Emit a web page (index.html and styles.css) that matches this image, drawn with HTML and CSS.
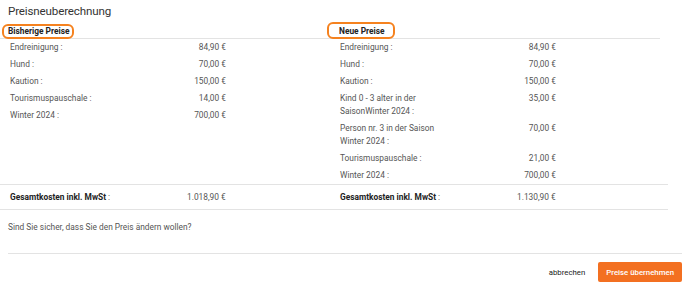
FILE: index.html
```html
<!DOCTYPE html>
<html lang="de">
<head>
<meta charset="utf-8">
<title>Preisneuberechnung</title>
<link rel="stylesheet" href="styles.css">
</head>
<body>
<div class="dialog">
  <h1 class="title">Preisneuberechnung</h1>
  <div class="compare">
    <div class="col">
      <div class="col-head"><span class="head-label mark mark-left">Bisherige Preise</span></div>
      <div class="rows">
        <div class="row"><span class="lbl">Endreinigung :</span><span class="val">84,90 €</span></div>
        <div class="row"><span class="lbl">Hund :</span><span class="val">70,00 €</span></div>
        <div class="row"><span class="lbl">Kaution :</span><span class="val">150,00 €</span></div>
        <div class="row"><span class="lbl">Tourismuspauschale :</span><span class="val">14,00 €</span></div>
        <div class="row"><span class="lbl">Winter 2024 :</span><span class="val">700,00 €</span></div>
      </div>
    </div>
    <div class="col">
      <div class="col-head col-head-right"><span class="head-label mark mark-right">Neue Preise</span></div>
      <div class="rows">
        <div class="row"><span class="lbl">Endreinigung :</span><span class="val">84,90 €</span></div>
        <div class="row"><span class="lbl">Hund :</span><span class="val">70,00 €</span></div>
        <div class="row"><span class="lbl">Kaution :</span><span class="val">150,00 €</span></div>
        <div class="row"><span class="lbl">Kind 0 - 3 alter in der SaisonWinter 2024 :</span><span class="val">35,00 €</span></div>
        <div class="row"><span class="lbl">Person nr. 3 in der Saison Winter 2024 :</span><span class="val">70,00 €</span></div>
        <div class="row"><span class="lbl">Tourismuspauschale :</span><span class="val">21,00 €</span></div>
        <div class="row"><span class="lbl">Winter 2024 :</span><span class="val">700,00 €</span></div>
      </div>
    </div>
  </div>
  <div class="totals">
    <div class="total"><span class="tl"><b>Gesamtkosten inkl. MwSt</b> :</span><span class="tv">1.018,90 €</span></div>
    <div class="total"><span class="tl"><b>Gesamtkosten inkl. MwSt</b> :</span><span class="tv">1.130,90 €</span></div>
  </div>
  <p class="question">Sind Sie sicher, dass Sie den Preis ändern wollen?</p>
  <div class="footer">
    <button class="btn btn-cancel" type="button">abbrechen</button>
    <button class="btn btn-confirm" type="button">Preise übernehmen</button>
  </div>
</div>
</body>
</html>
```
FILE: styles.css
```css
html, body {
  margin: 0;
  padding: 0;
  background: #ffffff;
}
body {
  font-family: Roboto, "Liberation Sans", Arial, sans-serif;
  color: #555555;
  font-size: 8.35px;
}
.dialog {
  width: 688px;
}
.title {
  margin: 3px 0 0 8px;
  font-size: 11.6px;
  letter-spacing: -0.15px;
  line-height: 16px;
  font-weight: 400;
  color: #333333;
}
.compare {
  display: grid;
  grid-template-columns: 330px 330px;
  align-items: start;
}
.col-head {
  padding: 6px 0 0 8px;
  height: 13px;
  line-height: 13px;
  border-bottom: 1px solid #e3e3e3;
}
.col-head-right {
  padding-left: 9px;
}
.head-label {
  font-weight: 700;
  color: #222222;
  font-size: 8.35px;
}
.mark {
  position: relative;
  display: inline-block;
}
.mark::before {
  content: "";
  position: absolute;
  border: 2px solid #f5821f;
  border-radius: 6px;
  pointer-events: none;
}
.mark-left::before {
  left: -6px;
  right: -5px;
  top: -1px;
  bottom: -1px;
}
.mark-right::before {
  left: -12px;
  right: -10px;
  top: -3px;
  bottom: -1px;
}
.rows {
  padding-left: 10px;
}
.row {
  display: grid;
  grid-template-columns: 112px 104px;
  padding: 2px 0;
  line-height: 13px;
}
.val {
  text-align: right;
}
.totals {
  display: grid;
  grid-template-columns: 330px 338px;
  border-top: 1px solid #e3e3e3;
  border-bottom: 1px solid #e3e3e3;
  width: 668px;
}
.total {
  display: grid;
  grid-template-columns: 177px auto;
  padding: 5.5px 0 5.5px 10px;
  line-height: 13px;
}
.tl b {
  font-weight: 700;
  color: #222222;
}
.question {
  margin: 11px 0 0 8px;
  line-height: 13px;
  color: #555555;
}
.footer {
  margin: 19px 6px 0 8px;
  border-top: 1px solid #e3e3e3;
  padding-top: 8px;
  display: flex;
  justify-content: flex-end;
  align-items: center;
  gap: 13px;
}
.btn {
  font-family: Roboto, "Liberation Sans", Arial, sans-serif;
  font-size: 7.8px;
  border: none;
  background: none;
  cursor: pointer;
  padding: 0;
}
.btn-cancel {
  color: #222222;
  font-weight: 400;
}
.btn-confirm {
  background: #f37021;
  color: #ffffff;
  font-weight: 500;
  height: 20px;
  padding: 0 8px;
  border-radius: 2px;
}
```
